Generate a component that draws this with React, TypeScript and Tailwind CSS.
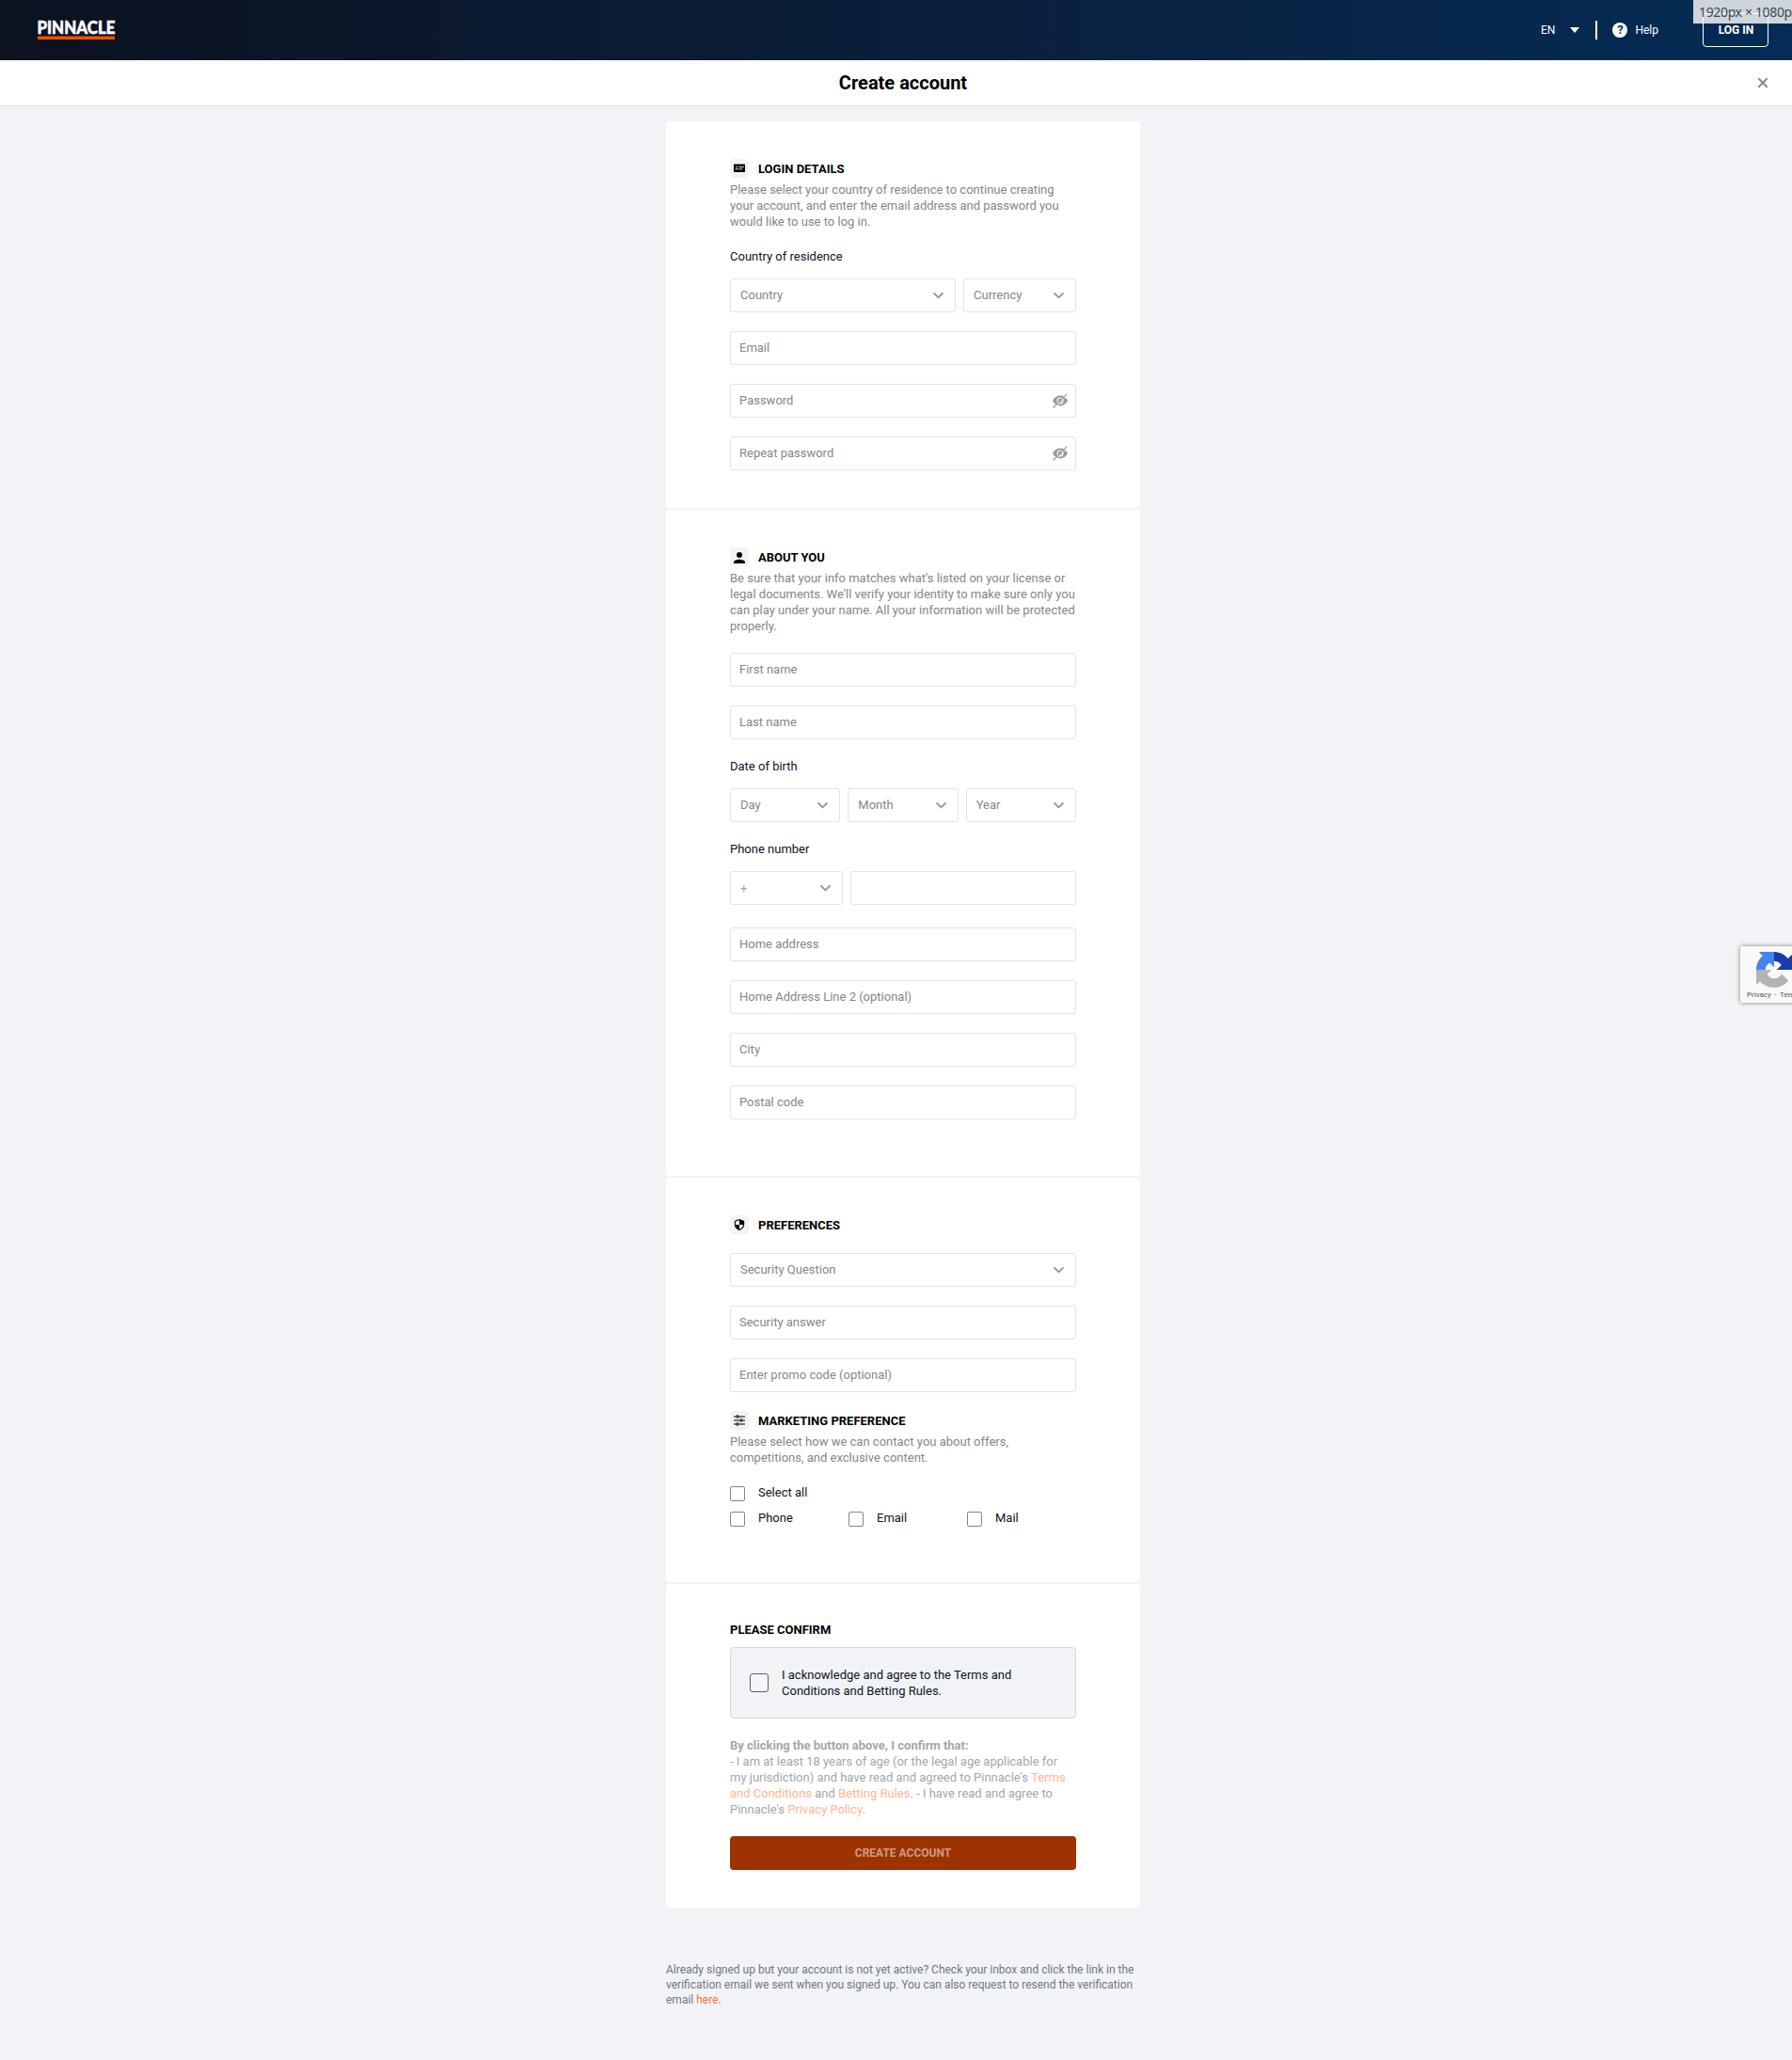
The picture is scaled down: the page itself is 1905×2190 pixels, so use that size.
import type { ReactNode } from 'react';

function Logo() {
  return (
    <svg width="82" height="20" viewBox="0 0 82 20" className="block overflow-visible" aria-label="Pinnacle">
      <text x="-0.6" y="14" textLength="83" lengthAdjust="spacingAndGlyphs" fill="#fff" stroke="#fff" strokeWidth="0.500" fontFamily="Lato, sans-serif" fontWeight="900" fontSize="18.500">
        PINNACLE
      </text>
      <rect y="16.500" width="82" height="3.500" fill="#ff5000" />
    </svg>
  );
}

function Chevron() {
  return (
    <svg width="11" height="8" viewBox="0 0 11 8" fill="none" stroke="#949494" strokeWidth="1.800" className="block shrink-0">
      <path d="M0.600 1.500L5.500 6.300L10.400 1.500" />
    </svg>
  );
}

function EyeOff() {
  return (
    <svg width="16" height="16" viewBox="0 0 16 16" className="block shrink-0">
      <path d="M0 8C1.800 4.500 4.700 2.600 8 2.600s6.200 1.900 8 5.400c-1.800 3.500-4.700 5.400-8 5.400S1.800 11.500 0 8z" fill="#9b9b9b" />
      <circle cx="8" cy="8" r="3.500" fill="#fff" />
      <circle cx="8" cy="8" r="2.400" fill="#9b9b9b" />
      <path d="M1.600 15.900L16 1.500" stroke="#fff" strokeWidth="0.900" />
      <path d="M0.500 15.500L15.300 0.700" stroke="#9b9b9b" strokeWidth="1.200" />
    </svg>
  );
}

function CardIcon() {
  return (
    <svg width="12" height="12" viewBox="0 0 12 12" className="block">
      <rect y="1.500" width="12" height="8.500" rx="0.600" fill="#000" />
      <circle cx="3" cy="4.600" r="0.900" fill="#c8cacd" />
      <path d="M1.500 7.200c0-1.600 3-1.600 3 0z" fill="#c8cacd" />
      <path d="M5.300 4.500h5.400M4.800 6.800h4.500" stroke="#e4e6e9" strokeWidth="1" />
    </svg>
  );
}

function PersonIcon() {
  return (
    <svg width="12" height="12" viewBox="0 0 12 12" className="mt-0.5 block">
      <circle cx="6" cy="3" r="3" fill="#000" />
      <path d="M0 12v-1.300C0 8.700 4 7.800 6 7.800s6 .9 6 2.900V12z" fill="#000" />
    </svg>
  );
}

function ShieldIcon() {
  return (
    <svg width="12" height="12" viewBox="0 0 12 12" className="block">
      <path d="M6 0L11.200 2v3.500c0 3-2.200 5.600-5.200 6.500C3 11.100 0.800 8.500 0.800 5.500V2z" fill="#000" />
      <path d="M6 1.300V6H1.900V2.800zM6 6h4.100c-.3 2.200-1.900 4.100-4.100 4.800z" fill="#f1f3f7" />
    </svg>
  );
}

function SlidersIcon() {
  return (
    <svg width="12" height="12" viewBox="0 0 12 12" className="block">
      <path d="M0 2h12M0 6h12M0 10h12" stroke="#000" strokeWidth="1.100" />
      <g fill="#777" stroke="#222" strokeWidth="0.800">
        <circle cx="4" cy="2" r="1.400" />
        <circle cx="8" cy="6" r="1.400" />
        <circle cx="4" cy="10" r="1.400" />
      </g>
    </svg>
  );
}

function Heading({ icon, children }: { icon: ReactNode; children: ReactNode }) {
  return (
    <h2 className="flex h-5 items-center gap-2.5 text-[13px] leading-5 font-bold text-black">
      <span className="flex size-5 items-center justify-center rounded bg-[#f1f3f7]">{icon}</span>
      <span className="pt-px">{children}</span>
    </h2>
  );
}

function Description({ children }: { children: ReactNode }) {
  return <p className="mt-1 mb-5 leading-[17px] text-[#868686]">{children}</p>;
}

function Label({ children }: { children: ReactNode }) {
  return <div className="mb-[15px] leading-[17px] text-[#0c1524]">{children}</div>;
}

function Field({ placeholder = '', secret = false }: { placeholder?: string; secret?: boolean }) {
  return (
    <div className="flex h-9 w-full items-center rounded-[3px] border border-[#e3e3e3] bg-white pr-2 pl-[9px]">
      <input
        type={secret ? 'password' : 'text'}
        placeholder={placeholder}
        className="h-[34px] min-w-0 flex-1 pb-px text-[13px] outline-none placeholder:text-[#868686]"
      />
      {secret && <EyeOff />}
    </div>
  );
}

function Select({ children, className = 'w-full' }: { children: ReactNode; className?: string }) {
  return (
    <button type="button" className={`flex h-9 items-center justify-between rounded-[3px] border border-[#e3e3e3] bg-white pr-3 pl-2.5 text-left text-[#868686] ${className}`}>
      <span className="pb-px">{children}</span>
      <Chevron />
    </button>
  );
}

function Checkbox({ children }: { children: ReactNode }) {
  return (
    <label className="flex w-[126px] shrink-0 gap-3.5">
      <span className="mt-0.5 size-4 rounded-[2px] border border-[#868686] bg-white" />
      <span className="leading-[17px] text-[#0c1524]">{children}</span>
    </label>
  );
}

function Card({ className = '', children }: { className?: string; children: ReactNode }) {
  return <section className={`w-[504px] rounded bg-white px-[68px] pt-10 ${className}`}>{children}</section>;
}

export default function App() {
  return (
    <div className="relative min-h-[2190px] w-full overflow-hidden bg-[#f1f3f7] font-[Roboto,sans-serif] text-[13px]">
      <header className="flex h-16 items-center justify-between bg-linear-to-r from-[#0b1220] to-[#042c56] pr-[25px] pl-10 text-white">
        <Logo />
        <div className="flex items-center text-[12px]">
          <span>EN</span>
          <svg width="10" height="6" viewBox="0 0 10 6" className="ml-4 block">
            <path d="M0 0h10L5 6z" fill="#fff" />
          </svg>
          <span className="ml-[17px] h-5 w-0.5 bg-white" />
          <span className="ml-4 flex size-4 items-center justify-center rounded-full bg-white text-[13px] leading-4 font-bold text-[#052a51]">?</span>
          <span className="ml-2">Help</span>
          <button type="button" className="ml-[47px] h-9 w-[70px] rounded border border-white pl-px text-[12px] font-bold">
            LOG IN
          </button>
        </div>
      </header>

      <div className="grid h-[49px] grid-cols-[1fr_auto_1fr] items-center border-b border-[#e1e3e4] bg-white pr-[26px] pl-[41px]">
        <span />
        <h1 className="text-[20px] leading-6 font-bold text-black">Create account</h1>
        <svg width="10" height="10" viewBox="0 0 10 10" className="block justify-self-end overflow-visible" stroke="#858a90" strokeWidth="2">
          <path d="M0.300 0.300l9.400 9.400M9.700 0.300l-9.400 9.400" />
        </svg>
      </div>

      <main className="ml-[708px] flex w-[504px] flex-col gap-0.5 pt-4">
        <Card className="h-[411px]">
          <Heading icon={<CardIcon />}>LOGIN DETAILS</Heading>
          <Description>
            Please select your country of residence to continue creating your account, and enter the email address and password you would like to use to log in.
          </Description>
          <Label>Country of residence</Label>
          <div className="flex flex-col gap-5">
            <div className="flex gap-2">
              <Select className="w-60">Country</Select>
              <Select className="w-[120px]">Currency</Select>
            </div>
            <Field placeholder="Email" />
            <Field placeholder="Password" secret />
            <Field placeholder="Repeat password" secret />
          </div>
        </Card>

        <Card className="h-[708px]">
          <Heading icon={<PersonIcon />}>ABOUT YOU</Heading>
          <Description>
            Be sure that your info matches what's listed on your license or legal documents. We'll verify your identity to make sure only you can play under your name. All your information will be protected properly.
          </Description>
          <div className="mb-5 flex flex-col gap-5">
            <Field placeholder="First name" />
            <Field placeholder="Last name" />
          </div>
          <Label>Date of birth</Label>
          <div className="mb-5 grid grid-cols-3 gap-2">
            <Select>Day</Select>
            <Select>Month</Select>
            <Select>Year</Select>
          </div>
          <Label>Phone number</Label>
          <div className="mb-6 flex gap-2">
            <Select className="w-[120px] shrink-0">
              <span className="relative top-px text-[#a5a5a5]">+</span>
            </Select>
            <Field />
          </div>
          <div className="flex flex-col gap-5">
            <Field placeholder="Home address" />
            <Field placeholder="Home Address Line 2 (optional)" />
            <Field placeholder="City" />
            <Field placeholder="Postal code" />
          </div>
        </Card>

        <Card className="h-[430px]">
          <Heading icon={<ShieldIcon />}>PREFERENCES</Heading>
          <div className="my-5 flex flex-col gap-5">
            <Select>Security Question</Select>
            <Field placeholder="Security answer" />
            <Field placeholder="Enter promo code (optional)" />
          </div>
          <Heading icon={<SlidersIcon />}>MARKETING PREFERENCE</Heading>
          <Description>Please select how we can contact you about offers, competitions, and exclusive content.</Description>
          <div className="flex flex-col gap-[9px]">
            <Checkbox>Select all</Checkbox>
            <div className="flex">
              <Checkbox>Phone</Checkbox>
              <Checkbox>Email</Checkbox>
              <Checkbox>Mail</Checkbox>
            </div>
          </div>
        </Card>

        <Card className="h-[344px]">
          <h2 className="mb-2.5 leading-[17px] font-bold text-black">PLEASE CONFIRM</h2>
          <label className="flex h-[76px] items-center gap-3.5 rounded border border-[#d5d7db] bg-[#f1f3f7] pl-5">
            <span className="size-5 shrink-0 rounded-[3px] border border-[#5c6068] bg-[#f4f5f9]" />
            <span className="w-[270px] leading-[17px] text-[#0c1524]">I acknowledge and agree to the Terms and Conditions and Betting Rules.</span>
          </label>
          <p className="my-5 leading-[17px] text-[#a6a6a6]">
            <strong className="font-bold">By clicking the button above, I confirm that:</strong>
            <br />- I am at least 18 years of age (or the legal age applicable for my jurisdiction) and have read and agreed to Pinnacle's{' '}
            <a className="text-[#ffb493]">Terms and Conditions</a> and <a className="text-[#ffb493]">Betting Rules</a>. - I have read and agree to Pinnacle's{' '}
            <a className="text-[#ffb493]">Privacy Policy</a>.
          </p>
          <button type="button" className="h-9 w-full rounded bg-[#9c3300] text-[12px] font-bold text-[#d19a80]">
            CREATE ACCOUNT
          </button>
        </Card>
      </main>

      <p className="mt-[58px] ml-[708px] w-[504px] text-[12px] leading-4 text-[#6f7885]">
        Already signed up but your account is not yet active? Check your inbox and click the link in the verification email we sent when you signed up. You can also request to resend the verification email <a className="text-[#ff6f33]">here</a>.
      </p>

      <div className="absolute top-0 right-0 flex h-[25px] w-[105px] items-center overflow-hidden bg-white/80 pb-px pl-[6px] font-['Noto_Sans',sans-serif] text-[14px] tracking-[-0.350px] whitespace-nowrap text-[#43484d]">
        <span>1920px × 1080px</span>
      </div>

      <aside className="absolute top-[1006px] left-[1850px] h-[60px] w-[256px] rounded-[2px] bg-[#f9f9f9] shadow-[0_0_5px_gray]">
        <svg width="38" height="38" viewBox="0 0 64 64" className="mt-1.5 ml-[17px] block">
          <path d="M64 31.955l-.033-1.370V4.687l-7.160 7.160C50.948 4.674 42.033.093 32.050.093c-10.400 0-19.622 4.960-25.458 12.640l11.736 11.860a15.550 15.550 0 0 1 4.754-5.334c2.050-1.600 4.952-2.906 8.968-2.906.485 0 .86.057 1.135.163 4.976.393 9.288 3.140 11.828 7.124l-8.307 8.307L64 31.953" fill="#1c3aa9" />
          <path d="M31.862.094l-1.370.033H4.594l7.160 7.160C4.580 13.147 0 22.060 0 32.046c0 10.400 4.960 19.622 12.640 25.458L24.500 45.768a15.550 15.550 0 0 1-5.334-4.754c-1.600-2.050-2.906-4.952-2.906-8.968 0-.485.057-.86.163-1.135.393-4.976 3.140-9.288 7.124-11.828l8.307 8.307L31.860.095" fill="#4285f4" />
          <path d="M.001 32.045l.033 1.370v25.898l7.160-7.160c5.860 7.173 14.774 11.754 24.760 11.754 10.400 0 19.622-4.960 25.458-12.640l-11.736-11.860a15.550 15.550 0 0 1-4.754 5.334c-2.050 1.600-4.952 2.906-8.968 2.906-.485 0-.86-.057-1.135-.163-4.976-.393-9.288-3.140-11.828-7.124l8.307-8.307c-10.522.04-22.400.066-27.295-.005" fill="#b3b3b3" />
        </svg>
        <div className="mt-px ml-[7px] text-[8px] leading-[13px] whitespace-nowrap text-[#555]">
          Privacy<span className="mx-[1.500px]"> - </span>Terms
        </div>
      </aside>
    </div>
  );
}
